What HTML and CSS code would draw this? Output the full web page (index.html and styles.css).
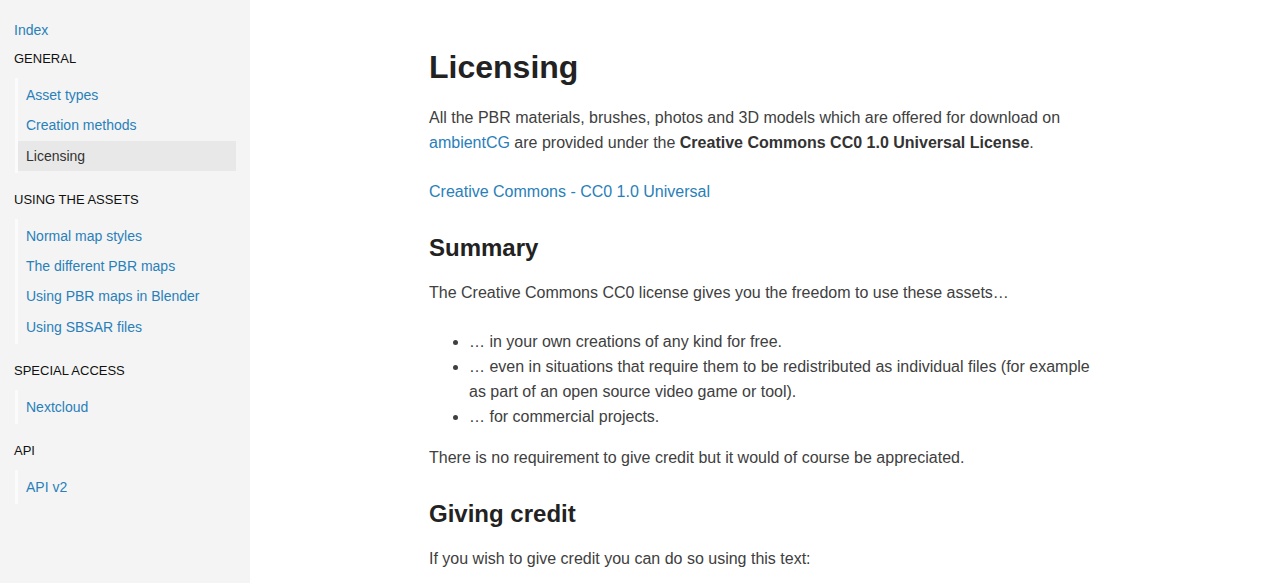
FILE: index.html
```html
<html>
    <head>
        <title>Licensing - ambientCG Docs</title>
        <link rel="stylesheet" href="styles.css">
    </head>
    <body>
        <div class="page">
            <!-- Navigation -->
            <nav class="sidebar">
                <a class="top-link" href="#">Index</a>

                <div class="section">GENERAL</div>
                <ul class="nav-list">
                    <li><a href="#">Asset types</a></li>
                    <li><a href="#">Creation methods</a></li>
                    <li class="active"><a href="#">Licensing</a></li>
                </ul>

                <div class="section">USING THE ASSETS</div>
                <ul class="nav-list">
                    <li><a href="#">Normal map styles</a></li>
                    <li><a href="#">The different PBR maps</a></li>
                    <li><a href="#">Using PBR maps in Blender</a></li>
                    <li><a href="#">Using SBSAR files</a></li>
                </ul>

                <div class="section">SPECIAL ACCESS</div>
                <ul class="nav-list">
                    <li><a href="#">Nextcloud</a></li>
                </ul>

                <div class="section">API</div>
                <ul class="nav-list">
                    <li><a href="#">API v2</a></li>
                </ul>
            </nav>

            <!-- Page content -->
            <main class="content">
                <h1>Licensing</h1>
                <p>All the PBR materials, brushes, photos and 3D models which are offered for download on <a href="#">ambientCG</a> are provided under the <strong>Creative Commons CC0 1.0 Universal License</strong>.</p>
                <p><a href="#">Creative Commons - CC0 1.0 Universal</a></p>

                <h2>Summary</h2>
                <p>The Creative Commons CC0 license gives you the freedom to use these assets…</p>
                <ul>
                    <li>… in your own creations of any kind for free.</li>
                    <li>… even in situations that require them to be redistributed as individual files (for example as part of an open source video game or tool).</li>
                    <li>… for commercial projects.</li>
                </ul>
                <p>There is no requirement to give credit but it would of course be appreciated.</p>

                <h2>Giving credit</h2>
                <p>If you wish to give credit you can do so using this text:</p>
            </main>
        </div>
    </body>
</html>
```

FILE: styles.css
```css
body{
    margin: 0;
    background: white;
    color: #404040;
    font-family: 'Liberation Sans', Arial, sans-serif;
}

a{
    color: #2980b9;
    text-decoration: none;
}

.page{
    display: flex;
    min-height: 100vh;
}

/* sidebar */
.sidebar{
    width: 250px;
    flex-shrink: 0;
    box-sizing: border-box;
    background: #f4f4f4;
    padding: 21px 14px 20px 14px;
    font-size: 14px;
}

.top-link{
    display: block;
    line-height: 18px;
}

.section{
    color: #111;
    font-size: 13px;
    line-height: 18px;
    margin-top: 11px;
}

.nav-list{
    list-style: none;
    margin: 10px 0 18px 1px;
    padding: 2px 0;
    border-left: 3px solid #fbfbfb;
}

.nav-list li a{
    display: block;
    padding: 0 8px;
    line-height: 30.25px;
}

.nav-list li.active{
    background: #e8e8e8;
}

.nav-list li.active a{
    color: #333;
}

/* content */
.content{
    width: 664px;
    margin-left: 179px;
    padding-top: 47px;
    font-size: 16px;
    line-height: 25px;
}

h1{
    font-size: 32px;
    line-height: 40px;
    color: #222;
    margin: 0 0 18px 0;
}

h2{
    font-size: 24px;
    line-height: 32px;
    color: #222;
    margin: 28px 0 16px 0;
}

p{
    margin: 0 0 24px 0;
}

strong{
    color: #333;
}

.content ul{
    margin: 0 0 16px 0;
    padding-left: 40px;
}
```
